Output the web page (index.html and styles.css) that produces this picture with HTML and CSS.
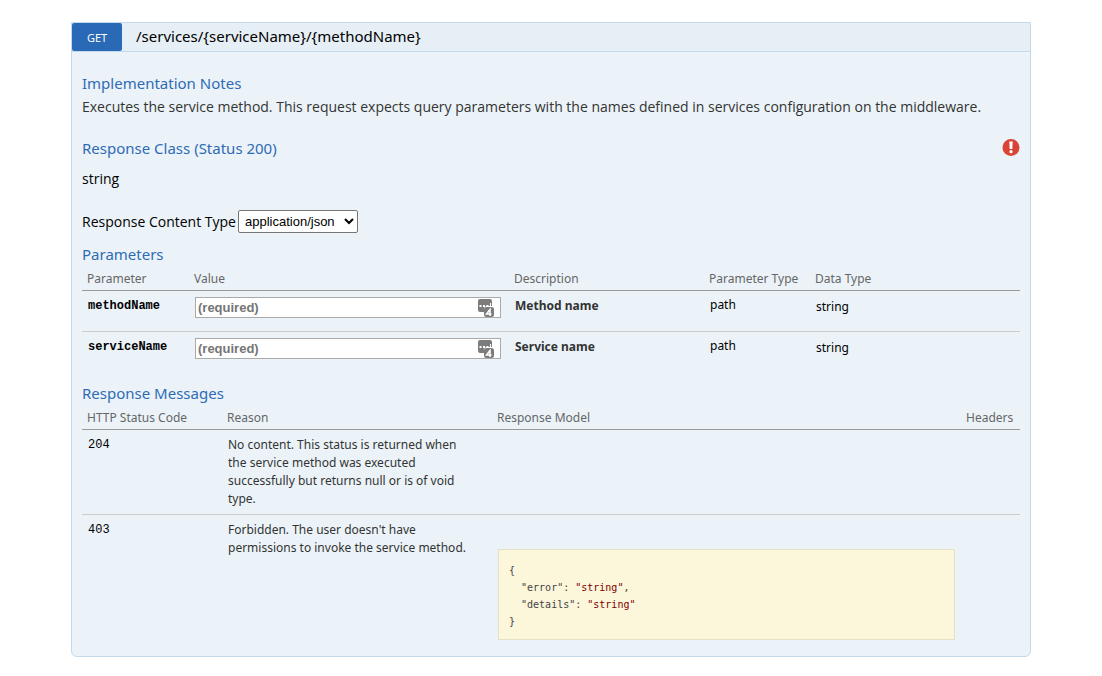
FILE: index.html
```html
<!DOCTYPE html>
<html lang="en">
<head>
<meta charset="utf-8">
<title>GET /services/{serviceName}/{methodName}</title>
<link rel="stylesheet" href="styles.css">
</head>
<body>
<main class="operation">
  <header class="operation-head">
    <button type="button" class="verb">GET</button>
    <a class="path" href="#content">/services/{serviceName}/{methodName}</a>
  </header>
  <div class="content" id="content">
    <section class="notes">
      <h4>Implementation Notes</h4>
      <p class="notes-text">Executes the service method. This request expects query parameters with the names defined in services configuration on the middleware.</p>
    </section>
    <section class="response-class">
      <div class="title-row">
        <h4>Response Class (Status 200)</h4>
        <svg class="alert" viewBox="0 0 18 18" role="img" aria-label="Authorization required">
          <circle cx="9" cy="8.5" r="8.5" fill="#d94436"/>
          <path d="M7.300 2.500h3.400l-.4 7.500H7.700z" fill="#fff"/>
          <circle cx="9" cy="12.700" r="1.600" fill="#fff"/>
        </svg>
      </div>
      <p class="model">string</p>
    </section>
    <div class="content-type">
      <label for="type">Response Content Type</label>
      <select id="type"><option>application/json</option></select>
    </div>
    <section class="block">
      <h4>Parameters</h4>
      <table class="params">
        <colgroup><col class="p-name"><col class="p-value"><col class="p-desc"><col class="p-type"><col></colgroup>
        <thead><tr><th>Parameter</th><th>Value</th><th>Description</th><th>Parameter Type</th><th>Data Type</th></tr></thead>
        <tbody>
          <tr>
            <td class="code strong"><label for="method">methodName</label></td>
            <td><div class="field"><input id="method" type="text" placeholder="(required)">
              <svg class="fill-icon" viewBox="0 0 17 18" aria-hidden="true"><path d="M2 0h10a2 2 0 0 1 2 2v5H8L6 9v4H2a2 2 0 0 1-2-2V2a2 2 0 0 1 2-2z" fill="#7c7c7c"/><path d="M1.500 6h2v2h-2zm3.500 0h2v2H5zm3.500 0h2v2h-2zm3.500-2h1v4h-1z" fill="#fff"/><rect x="6" y="8" width="10" height="10" rx="2.500" fill="#7c7c7c"/><path d="M12 17v-6.500L8.500 15h5" fill="none" stroke="#fff" stroke-width="1.500"/></svg></div></td>
            <td class="desc">Method name</td><td>path</td><td class="data">string</td>
          </tr>
          <tr>
            <td class="code strong"><label for="service">serviceName</label></td>
            <td><div class="field"><input id="service" type="text" placeholder="(required)">
              <svg class="fill-icon" viewBox="0 0 17 18" aria-hidden="true"><path d="M2 0h10a2 2 0 0 1 2 2v5H8L6 9v4H2a2 2 0 0 1-2-2V2a2 2 0 0 1 2-2z" fill="#7c7c7c"/><path d="M1.500 6h2v2h-2zm3.500 0h2v2H5zm3.500 0h2v2h-2zm3.500-2h1v4h-1z" fill="#fff"/><rect x="6" y="8" width="10" height="10" rx="2.500" fill="#7c7c7c"/><path d="M12 17v-6.500L8.500 15h5" fill="none" stroke="#fff" stroke-width="1.500"/></svg></div></td>
            <td class="desc">Service name</td><td>path</td><td class="data">string</td>
          </tr>
        </tbody>
      </table>
    </section>
    <section class="block">
      <h4>Response Messages</h4>
      <table class="messages">
        <colgroup><col class="m-code"><col class="m-reason"><col><col class="m-headers"></colgroup>
        <thead><tr><th>HTTP Status Code</th><th>Reason</th><th>Response Model</th><th>Headers</th></tr></thead>
        <tbody>
          <tr><td class="code">204</td><td class="reason">No content. This status is returned when the service method was executed successfully but returns null or is of void type.</td><td></td><td></td></tr>
          <tr><td class="code">403</td><td class="reason">Forbidden. The user doesn't have permissions to invoke the service method.</td><td><pre class="snippet">{
  "error": <span class="str">"string"</span>,
  "details": <span class="str">"string"</span>
}</pre></td><td></td></tr>
        </tbody>
      </table>
    </section>
  </div>
</main>
</body>
</html>
```
FILE: styles.css
```css
* { box-sizing: border-box; }
body {
  margin: 0;
  padding: 22px 71px 19px;
  background: #fff;
  color: #000;
  font-family: "Open Sans", "Noto Sans", sans-serif;
  font-size: 14px;
}
h4, p, pre { margin: 0; font-weight: 400; }
.operation {
  border: 1px solid #c3d9ec;
  border-radius: 0 0 6px 6px;
  background: #ebf3f9;
}
.operation-head {
  display: flex;
  height: 29px;
  border-bottom: 1px solid #c3d9ec;
  background: #e7eff6;
}
.verb {
  width: 50px;
  height: 28px;
  padding: 2px 0 0;
  border: 0;
  border-radius: 2px;
  background: #2a69b5;
  color: #fff;
  font: 11px/20px "Noto Sans", "Open Sans", sans-serif;
}
.path {
  padding-left: 14px;
  color: #000;
  font-family: "Noto Sans", "Open Sans", sans-serif;
  font-size: 15px;
  line-height: 26px;
  text-decoration: none;
}
.content { padding: 22px 10px 11px; }
h4 {
  padding-bottom: 2px;
  color: #2f6bb5;
  font-family: "Noto Sans", "Open Sans", sans-serif;
  font-size: 15px;
  line-height: 18px;
}
.notes-text { padding-top: 3px; color: #333; line-height: 20px; }
.response-class { padding-top: 22px; }
.title-row { display: flex; justify-content: space-between; }
.alert { width: 18px; height: 18px; }
.model { padding: 10px 0 21px; line-height: 20px; }
.content-type { display: flex; align-items: center; gap: 2px; height: 23px; }
select {
  width: 120px;
  height: 23px;
  padding: 0 0 0 2px;
  border: 1px solid #767676;
  border-radius: 2px;
  background: #fff;
  color: #000;
  font: 13px "Liberation Sans", Arial, sans-serif;
}
.block { padding-top: 12px; }
table {
  width: 100%;
  table-layout: fixed;
  border-collapse: separate;
  border-spacing: 0;
  font-family: "Noto Sans", "Open Sans", sans-serif;
}
th {
  height: 26px;
  padding: 4px 0 2px 5px;
  border-bottom: 1px solid #999;
  color: #666;
  font-size: 12px;
  font-weight: 400;
  line-height: 18px;
  text-align: left;
}
td {
  padding: 5px 0 5px 6px;
  font-size: 12px;
  line-height: 18px;
  vertical-align: top;
}
tbody tr:not(:last-child) td { border-bottom: 1px solid #ccc; }
.params tbody tr { height: 41px; }
.params tbody tr:last-child { height: 40px; }
.p-name { width: 107px; }
.p-value { width: 320px; }
.p-desc { width: 195px; }
.p-type { width: 106px; }
.m-code { width: 140px; }
.m-reason { width: 270px; }
.m-headers { width: 59px; }
.code { padding-top: 6px; font-family: "Liberation Mono", monospace; font-size: 12px; }
.strong { font-weight: 700; }
.desc { padding-top: 6px; color: #333; font-weight: 700; }
.data { padding-top: 7px; }
.reason { padding: 6px 24px 6px 6px; color: #333; }
.field { position: relative; width: 306px; padding-top: 1px; }
.field input {
  display: block;
  width: 100%;
  height: 21px;
  padding: 0 24px 0 2px;
  border: 1px solid #aaa;
  background: #fff;
  font: 700 13px "Liberation Sans", Arial, sans-serif;
}
.field input::placeholder { color: #757575; opacity: 1; }
.fill-icon { position: absolute; top: 3px; right: 6px; width: 17px; height: 18px; }
.snippet {
  margin: 29px 6px 0 0;
  padding: 12px 10px 9px;
  border: 1px solid #e5e0c6;
  background: #fcf6db;
  color: #444;
  font: 10px/17px "DejaVu Sans Mono", monospace;
}
.str { color: #800000; }
```
